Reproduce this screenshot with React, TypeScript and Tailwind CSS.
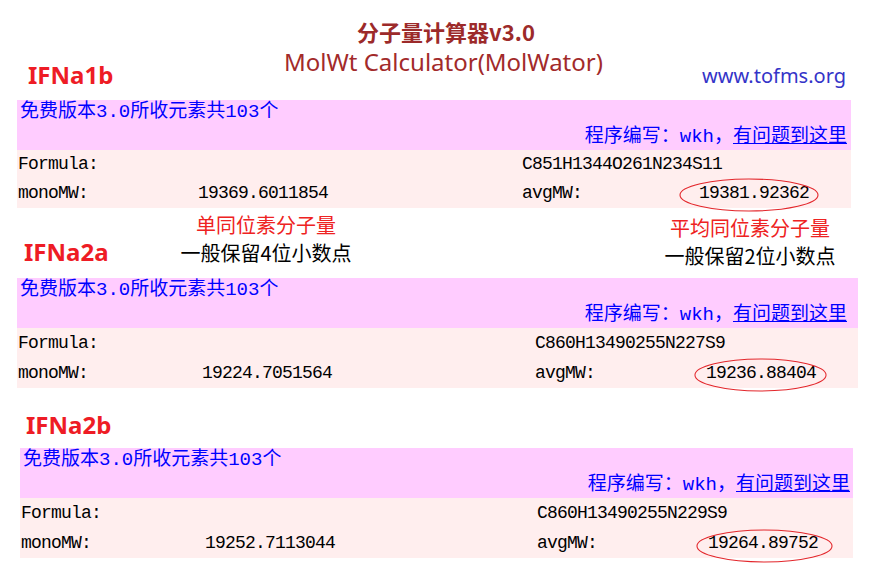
const cjk = "font-['Liberation_Mono','Noto_Sans_CJK_SC',monospace] text-[19px] text-[#0000ff]";
const mono = "font-['Liberation_Mono',monospace] text-[18px] tracking-[-0.8px] text-black pl-px";

type PanelProps = {
  wrap: string;
  cols: string;
  rowH: string;
  pr: string;
  ring: string;
  formula: string;
  mono: string;
  avg: string;
};

function Panel(p: PanelProps) {
  return (
    <div className={p.wrap}>
      <div className={`bg-[#ffccff] h-[50px] pl-[3px] ${p.pr} ${cjk} leading-[25px]`}>
        <div>免费版本3.0所收元素共103个</div>
        <div className="text-right">
          程序编写：wkh，<span className="underline">有问题到这里</span>
        </div>
      </div>
      <div className="bg-[#ffeeee]">
        <div className={`grid ${p.cols} ${p.rowH} items-center`}>
          <div className={mono}>Formula:</div>
          <div />
          <div className={mono}>{p.formula}</div>
          <div />
        </div>
        <div className={`grid ${p.cols} ${p.rowH} items-center`}>
          <div className={mono}>monoMW:</div>
          <div className={mono}>{p.mono}</div>
          <div className={mono}>avgMW:</div>
          <div className={`relative ${mono}`}>
            {p.avg}
            <svg className={`absolute ${p.ring}`} viewBox="0 0 140 34" preserveAspectRatio="none">
              <ellipse cx="70" cy="17" rx="69" ry="16" fill="none" stroke="#e3262b" strokeWidth="1.1" />
            </svg>
          </div>
        </div>
      </div>
    </div>
  );
}

const label = "font-['Noto_Sans',sans-serif] font-bold text-[24px] text-[#ee1c25] leading-[30px]";
const note = "font-['Noto_Sans_CJK_SC',sans-serif] text-[20px]";

export default function App() {
  return (
    <div className="w-[870px] h-[572px] bg-white overflow-hidden">
      {/* header */}
      <div className="pt-[18px] pl-[22px] flex justify-center">
        <div className="font-['Noto_Sans_CJK_SC',sans-serif] font-bold text-[22px] leading-[26px] text-[#9c2a2a]">
          分子量计算器v3.0
        </div>
      </div>
      <div className="h-[56px] flex items-start pl-[28px]">
        <div className={`${label} mt-[16px] w-[256px]`}>IFNa1b</div>
        <div className="font-['Noto_Sans',sans-serif] text-[24px] leading-[30px] mt-[3px] text-[#a22a2a]">
          MolWt Calculator(MolWator)
        </div>
        <div className="ml-auto mr-[24px] mt-[17px] font-['Noto_Sans',sans-serif] text-[20px] leading-[30px] text-[#3434c8]">
          www.tofms.org
        </div>
      </div>

      <Panel
        wrap="ml-[17px] w-[834px]"
        cols="grid-cols-[180px_324px_177px_1fr]"
        rowH="h-[29px]"
        pr="pr-[4px]"
        ring="left-[-19px] top-[-2px] w-[140px] h-[34px]"
        formula="C851H1344O261N234S11"
        mono="19369.6011854"
        avg="19381.92362"
      />

      {/* notes */}
      <div className="h-[70px] flex items-start">
        <div className={`${label} ml-[24px] w-[152px] pt-[29px]`}>IFNa2a</div>
        <div className={`${note} w-[180px] pt-[3px] leading-[28px] flex flex-col items-center`}>
          <div className="text-[#ee2222]">单同位素分子量</div>
          <div className="text-black">一般保留4位小数点</div>
        </div>
        <div className={`${note} ml-[304px] w-[180px] pt-[6px] leading-[28px] flex flex-col items-center`}>
          <div className="text-[#ee2222]">平均同位素分子量</div>
          <div className="text-black">一般保留2位小数点</div>
        </div>
      </div>

      <Panel
        wrap="ml-[17px] w-[841px]"
        cols="grid-cols-[184px_333px_171px_1fr]"
        rowH="h-[30px]"
        pr="pr-[11px]"
        ring="left-[-11px] top-[-2px] w-[133px] h-[34px]"
        formula="C860H13490255N227S9"
        mono="19224.7051564"
        avg="19236.88404"
      />

      <div className="h-[60px] pt-[22px] pl-[26px]">
        <div className={label}>IFNa2b</div>
      </div>

      <Panel
        wrap="ml-[20px] w-[833px]"
        cols="grid-cols-[184px_332px_171px_1fr]"
        rowH="h-[30px]"
        pr="pr-[3px]"
        ring="left-[-11px] top-[-1px] w-[137px] h-[34px]"
        formula="C860H13490255N229S9"
        mono="19252.7113044"
        avg="19264.89752"
      />
    </div>
  );
}
